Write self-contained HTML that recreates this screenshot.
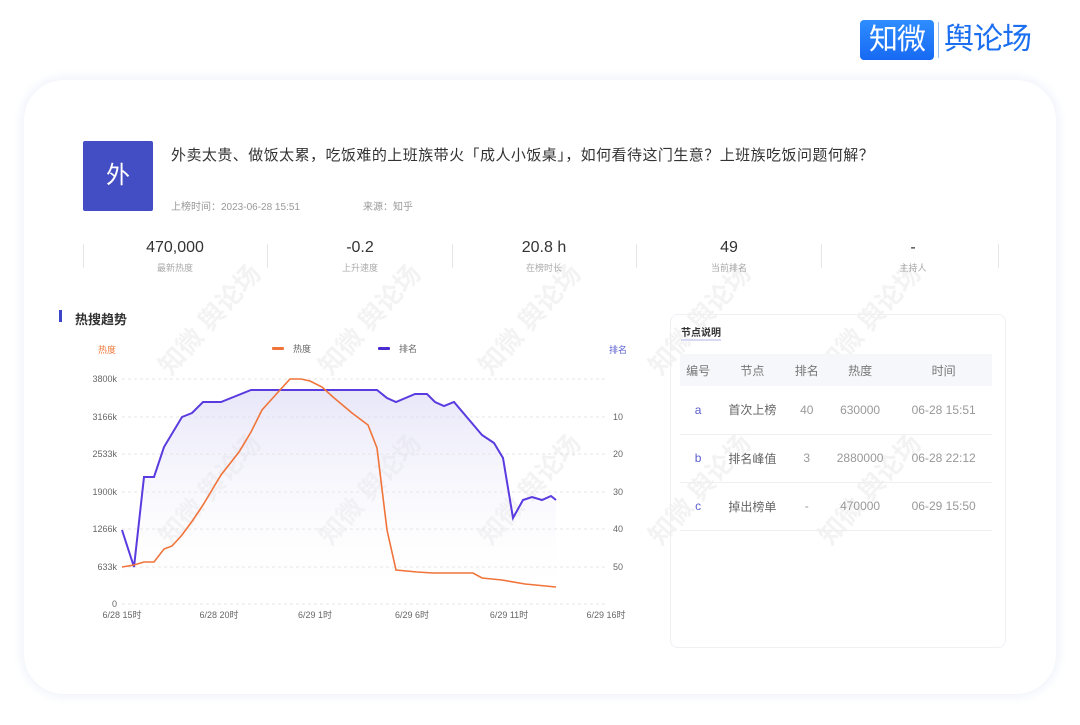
<!DOCTYPE html>
<html><head><meta charset="utf-8"><style>
*{margin:0;padding:0;box-sizing:border-box}
body{width:1080px;height:725px;background:#fff;font-family:"Liberation Sans","Noto Sans CJK SC",sans-serif;position:relative;overflow:hidden;color:#333}
.card{position:absolute;left:24px;top:80px;width:1032px;height:614px;border-radius:40px;background:#fff;box-shadow:0 0 10px 3px #f0f3fa}
.abs{position:absolute}
.logo1{left:860px;top:20px;width:74px;height:40px;background:linear-gradient(#2e8dff,#1769f2);border-radius:4px;color:#fff;font-size:29px;line-height:40px;text-align:center;letter-spacing:-1px}
.logo2{left:944px;top:20px;font-size:30px;line-height:40px;color:#1b6ff0;letter-spacing:-1px}
.sep{left:938px;top:22px;width:1px;height:36px;background:#9cc0f5}
.av{left:83px;top:141px;width:70px;height:70px;background:#444ec4;border-radius:2px;color:#fff;font-size:24px;line-height:70px;text-align:center}
.stat{top:237px;width:184px;text-align:center}
.stat b{display:block;font-weight:normal;font-size:16px;color:#333;line-height:22px}
.stat span{display:block;font-size:9px;color:#aaa;margin-top:2px}
.vl{top:244px;width:1px;height:24px;background:#e6e6e6}
.grid{stroke:#e4e4e4;stroke-dasharray:3 3}
.tb{left:670px;top:314px;width:336px;height:334px;border:1px solid #eef0f4;border-radius:8px}
table{position:absolute;left:680px;top:354px;width:312px;border-collapse:collapse;font-size:12px;color:#666}
th{background:#f6f7fa;font-weight:normal;height:32px;color:#777}
td{height:48px;text-align:center;border-bottom:1px solid #efefef}
.wm{position:absolute;font-size:26px;color:#000;opacity:.045;transform:rotate(-48deg);white-space:nowrap;font-weight:bold;pointer-events:none}
</style></head><body>
<div class="abs logo1">知微</div><div class="abs sep"></div><div class="abs logo2">舆论场</div>
<div class="card"></div>
<div class="abs av">外</div>
<div class="abs" style="left:171px;top:144px;font-size:15px;letter-spacing:0.45px;color:#333">外卖太贵、做饭太累，吃饭难的上班族带火「成人小饭桌」，如何看待这门生意？上班族吃饭问题何解？</div>
<div class="abs" style="left:171px;top:198px;font-size:10px;color:#999">上榜时间：2023-06-28 15:51</div>
<div class="abs" style="left:363px;top:198px;font-size:10px;color:#999">来源：知乎</div>
<div class="abs vl" style="left:83px"></div><div class="abs vl" style="left:267px"></div><div class="abs vl" style="left:452px"></div><div class="abs vl" style="left:636px"></div><div class="abs vl" style="left:821px"></div><div class="abs vl" style="left:998px"></div>
<div class="abs stat" style="left:83px"><b>470,000</b><span>最新热度</span></div>
<div class="abs stat" style="left:268px"><b>-0.2</b><span>上升速度</span></div>
<div class="abs stat" style="left:452px"><b>20.8 h</b><span>在榜时长</span></div>
<div class="abs stat" style="left:637px"><b>49</b><span>当前排名</span></div>
<div class="abs stat" style="left:821px"><b>-</b><span>主持人</span></div>
<div class="abs" style="left:59px;top:310px;width:3px;height:12px;background:#3d45c8"></div>
<div class="abs" style="left:75px;top:309px;font-size:13px;font-weight:bold;color:#333">热搜趋势</div>
<div class="wm" style="left:140px;top:300px">知微 舆论场</div>
<div class="wm" style="left:300px;top:300px">知微 舆论场</div>
<div class="wm" style="left:460px;top:300px">知微 舆论场</div>
<div class="wm" style="left:630px;top:300px">知微 舆论场</div>
<div class="wm" style="left:800px;top:300px">知微 舆论场</div>
<div class="wm" style="left:140px;top:470px">知微 舆论场</div>
<div class="wm" style="left:300px;top:470px">知微 舆论场</div>
<div class="wm" style="left:460px;top:470px">知微 舆论场</div>
<div class="wm" style="left:630px;top:470px">知微 舆论场</div>
<div class="wm" style="left:800px;top:470px">知微 舆论场</div>
<svg class="abs" style="left:0;top:0" width="1080" height="725">
<defs><linearGradient id="g" x1="0" y1="0" x2="0" y2="1"><stop offset="0" stop-color="#d8d6f4" stop-opacity=".6"/><stop offset="1" stop-color="#fff" stop-opacity="0"/></linearGradient></defs>
<g font-size="9" fill="#666" font-family="Liberation Sans,Noto Sans CJK SC,sans-serif">
<text x="98" y="353" fill="#f07a3c">热度</text><text x="609" y="353" fill="#5a5fd0">排名</text>
<rect x="272" y="347" width="12" height="3" fill="#f0743a" rx="1"/><text x="293" y="352">热度</text>
<rect x="378" y="347" width="12" height="3" fill="#4a2bd0" rx="1"/><text x="399" y="352">排名</text>
<g text-anchor="end"><text x="117" y="382">3800k</text><text x="117" y="420">3166k</text><text x="117" y="457">2533k</text><text x="117" y="495">1900k</text><text x="117" y="532">1266k</text><text x="117" y="570">633k</text><text x="117" y="607">0</text></g>
<text x="613" y="420">10</text><text x="613" y="457">20</text><text x="613" y="495">30</text><text x="613" y="532">40</text><text x="613" y="570">50</text>
<g text-anchor="middle"><text x="122" y="618">6/28 15时</text><text x="219" y="618">6/28 20时</text><text x="315" y="618">6/29 1时</text><text x="412" y="618">6/29 6时</text><text x="509" y="618">6/29 11时</text><text x="606" y="618">6/29 16时</text></g>
</g>
<g class="grid"><line x1="122" y1="379" x2="606" y2="379"/><line x1="122" y1="417" x2="606" y2="417"/><line x1="122" y1="454" x2="606" y2="454"/><line x1="122" y1="492" x2="606" y2="492"/><line x1="122" y1="529" x2="606" y2="529"/><line x1="122" y1="567" x2="606" y2="567"/><line x1="122" y1="604" x2="606" y2="604"/></g>
<path d="M122,530L134,567L144,477L154,477L164,447L182,417L192,413L203,402L221,402L251,390L377,390L387,398L396,402L415,394L427,394L435,402L444,406L454,402L482,435L494,443L503,458L513,518L523,500L532,497L542,500L551,496L556,500L556,604L122,604Z" fill="url(#g)"/>
<polyline fill="none" stroke="#5a3be0" stroke-width="2" points="122,530 134,567 144,477 154,477 164,447 182,417 192,413 203,402 221,402 251,390 377,390 387,398 396,402 415,394 427,394 435,402 444,406 454,402 482,435 494,443 503,458 513,518 523,500 532,497 542,500 551,496 556,500"/>
<polyline fill="none" stroke="#f0743a" stroke-width="1.6" points="122,567 134,565 144,562 154,562 164,549 172,546 182,535 193,520 203,505 221,475 239,452 251,432 262,410 280,390 290,379 301,379 310,381 322,387 333,397 352,413 368,425 377,448 387,530 396,570 417,572 433,573 463,573 473,573 482,578 502,580 525,584 556,587"/>
</svg>
<div class="abs tb"></div>
<div class="abs" style="left:681px;top:324px;font-size:10px;font-weight:bold;color:#333;border-bottom:2px solid #d8d9f2">节点说明</div>
<table><tr><th>编号</th><th>节点</th><th>排名</th><th>热度</th><th>时间</th></tr>
<tr><td style="color:#5a5fd0">a</td><td>首次上榜</td><td style="color:#999">40</td><td style="color:#999">630000</td><td style="color:#999">06-28 15:51</td></tr>
<tr><td style="color:#5a5fd0">b</td><td>排名峰值</td><td style="color:#999">3</td><td style="color:#999">2880000</td><td style="color:#999">06-28 22:12</td></tr>
<tr><td style="color:#5a5fd0">c</td><td>掉出榜单</td><td style="color:#999">-</td><td style="color:#999">470000</td><td style="color:#999">06-29 15:50</td></tr></table>
</body></html>
